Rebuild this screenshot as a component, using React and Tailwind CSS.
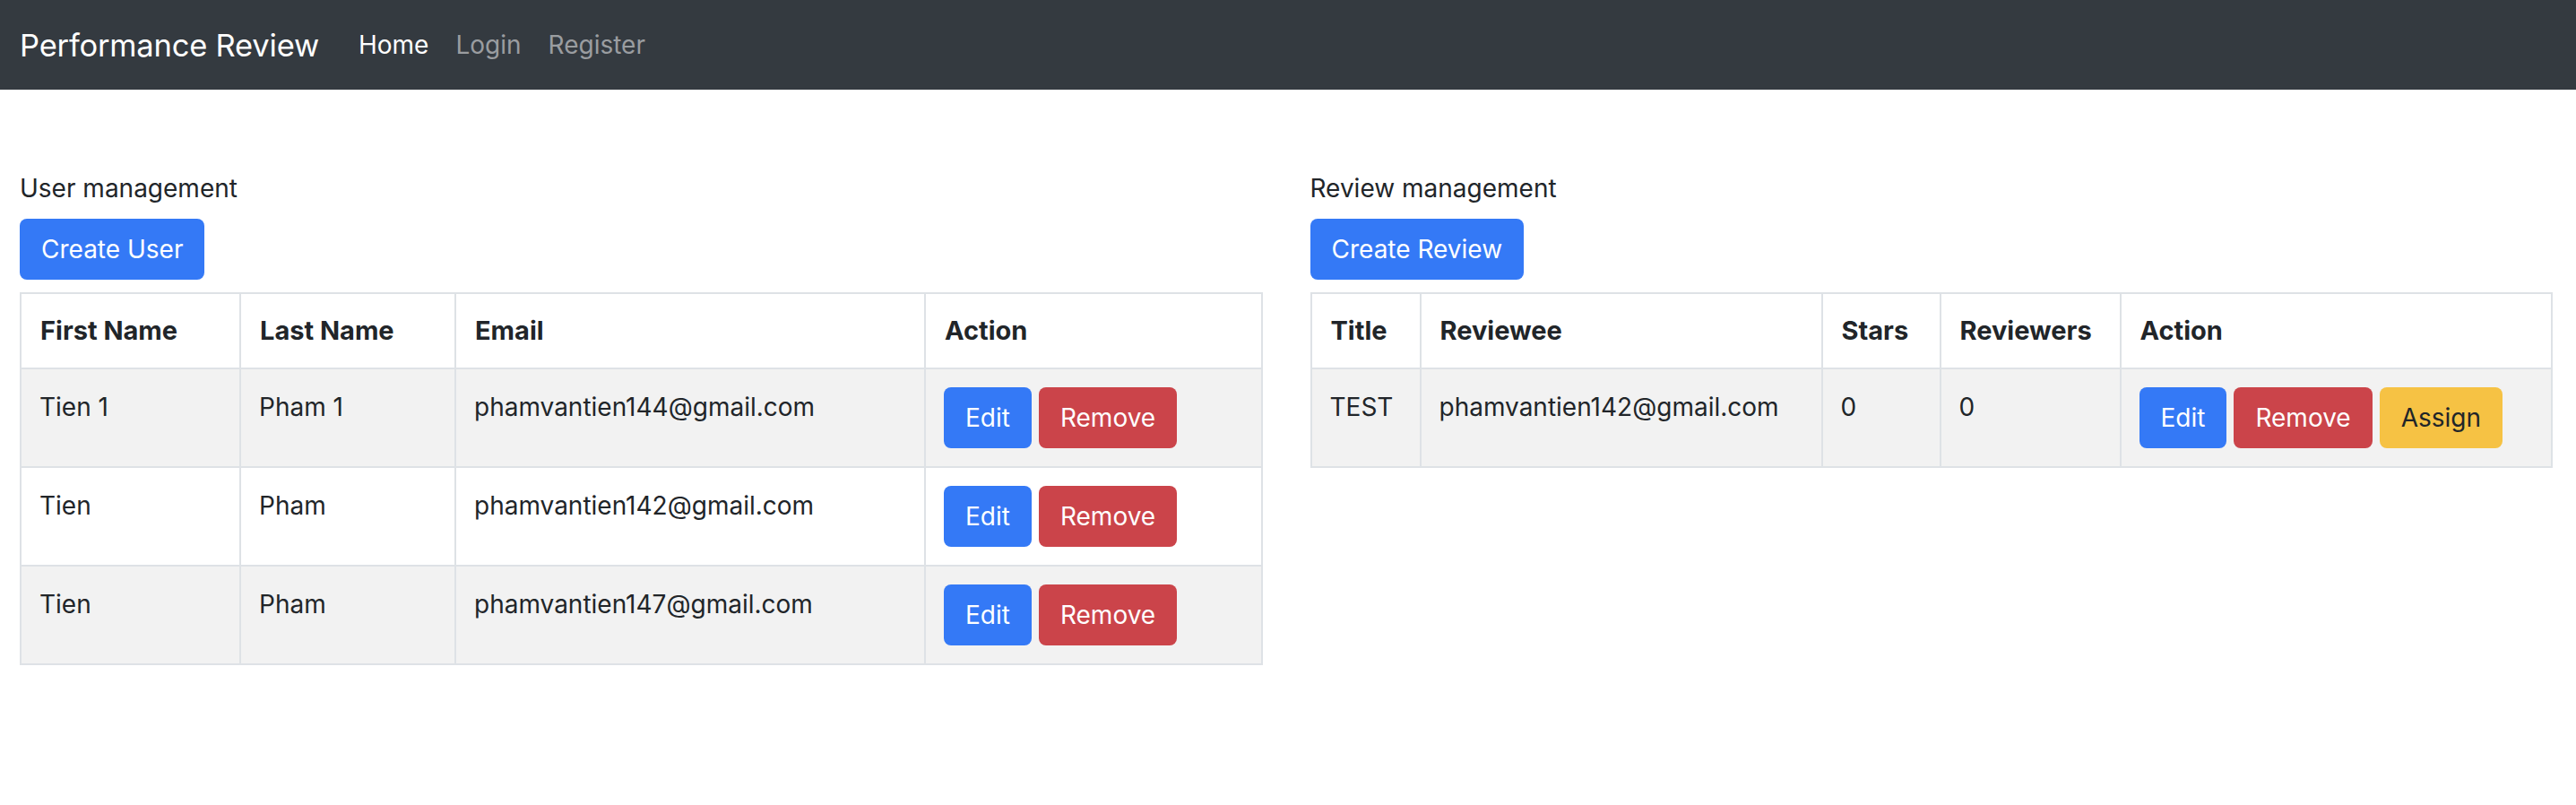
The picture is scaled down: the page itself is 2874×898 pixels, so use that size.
import React from "react";

const font = { fontFamily: "Inter, 'Noto Sans', 'Liberation Sans', sans-serif" };

function Btn({ color, children }) {
  const cls =
    color === "blue"
      ? "bg-[#3479f6] text-white"
      : color === "red"
      ? "bg-[#cb444a] text-white"
      : "bg-[#f6c244] text-[#212529]";
  return (
    <button
      className={`${cls} h-[68px] px-[24px] rounded-[8px] text-[28px] leading-[44px] flex items-center justify-center`}
    >
      {children}
    </button>
  );
}

function Table({ cols, rows }) {
  return (
    <table className="table-fixed border-collapse w-full text-[28px] leading-[44px] text-[#212529]">
      <colgroup>
        {cols.map((c, i) => (
          <col key={i} style={{ width: c.w }} />
        ))}
      </colgroup>
      <thead>
        <tr>
          {cols.map((c, i) => (
            <th
              key={i}
              className="border-2 border-[#dee2e6] px-[21px] py-[19px] text-left text-[29px] font-bold align-bottom"
            >
              {c.label}
            </th>
          ))}
        </tr>
      </thead>
      <tbody>
        {rows.map((r, ri) => (
          <tr key={ri} className={ri % 2 === 0 ? "bg-[#f2f2f2]" : "bg-white"}>
            {r.map((cell, ci) => (
              <td
                key={ci}
                className="border-2 border-[#dee2e6] px-[20px] py-[20px] align-top"
              >
                {cell}
              </td>
            ))}
          </tr>
        ))}
      </tbody>
    </table>
  );
}

export default function App() {
  const userActions = (
    <div className="flex gap-[8px]">
      <Btn color="blue">Edit</Btn>
      <Btn color="red">Remove</Btn>
    </div>
  );
  const reviewActions = (
    <div className="flex gap-[8px]">
      <Btn color="blue">Edit</Btn>
      <Btn color="red">Remove</Btn>
      <Btn color="yellow">Assign</Btn>
    </div>
  );
  return (
    <div style={font} className="w-[2874px] min-h-[898px] bg-white">
      <nav className="h-[100px] bg-[#343a40] flex items-center px-[22px]">
        <span className="text-white text-[34.5px] tracking-[-0.2px] leading-[55px] mr-[29px]">Performance Review</span>
        <a className="text-white text-[28px] leading-[44px] px-[15px]">Home</a>
        <a className="text-[#9a9da0] text-[28px] leading-[44px] px-[15px]">Login</a>
        <a className="text-[#9a9da0] text-[28px] leading-[44px] px-[15px]">Register</a>
      </nav>
      <main className="pl-[22px] pr-[27px] pt-[88px] grid grid-cols-2 gap-x-[54px] items-start">
        <section className="flex flex-col">
          <div className="text-[28px] leading-[44px] text-[#212529]">User management</div>
          <div className="mt-[12px] mb-[14px] flex">
            <Btn color="blue">Create User</Btn>
          </div>
          <Table
            cols={[
              { label: "First Name", w: "245px" },
              { label: "Last Name", w: "240px" },
              { label: "Email", w: "524px" },
              { label: "Action", w: "376px" },
            ]}
            rows={[
              ["Tien 1", "Pham 1", "phamvantien144@gmail.com", userActions],
              ["Tien", "Pham", "phamvantien142@gmail.com", userActions],
              ["Tien", "Pham", "phamvantien147@gmail.com", userActions],
            ]}
          />
        </section>
        <section className="flex flex-col">
          <div className="text-[28px] leading-[44px] text-[#212529]">Review management</div>
          <div className="mt-[12px] mb-[14px] flex">
            <Btn color="blue">Create Review</Btn>
          </div>
          <Table
            cols={[
              { label: "Title", w: "122px" },
              { label: "Reviewee", w: "448px" },
              { label: "Stars", w: "132px" },
              { label: "Reviewers", w: "201px" },
              { label: "Action", w: "481px" },
            ]}
            rows={[["TEST", "phamvantien142@gmail.com", "0", "0", reviewActions]]}
          />
        </section>
      </main>
    </div>
  );
}
